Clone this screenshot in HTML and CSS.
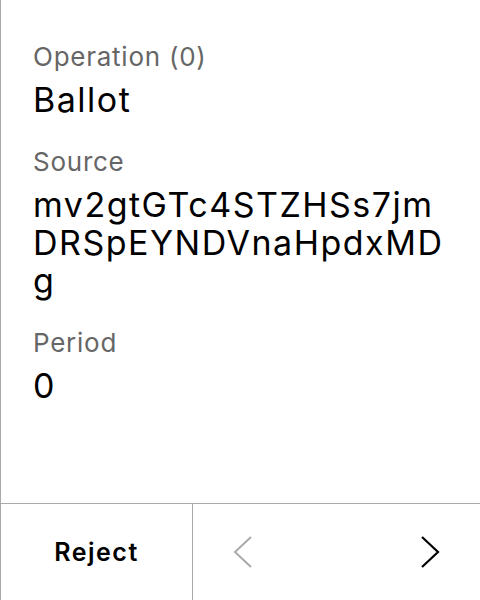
FILE: index.html
```html
<!DOCTYPE html>
<html>
<head>
<meta charset="utf-8">
<link rel="stylesheet" href="styles.css">
</head>
<body>
<div class="panel">
  <div class="content">
    <div class="field">
      <div class="label">Operation (0)</div>
      <div class="value">Ballot</div>
    </div>
    <div class="field">
      <div class="label">Source</div>
      <div class="value">mv2gtGTc4STZHSs7jmDRSpEYNDVnaHpdxMDg</div>
    </div>
    <div class="field">
      <div class="label">Period</div>
      <div class="value">0</div>
    </div>
  </div>
  <div class="footer">
    <div class="reject">Reject</div>
    <div class="nav">
      <svg class="chev chev-prev" width="20" height="32" viewBox="0 0 20 32"><polyline points="18,1 2,16 18,31" fill="none" stroke="currentColor" stroke-width="2"/></svg>
      <svg class="chev chev-next" width="20" height="32" viewBox="0 0 20 32"><polyline points="2,1 18,16 2,31" fill="none" stroke="currentColor" stroke-width="2.2"/></svg>
    </div>
  </div>
</div>
</body>
</html>
```
FILE: styles.css
```css
html, body {
  margin: 0;
  padding: 0;
  background: #fff;
}
body {
  font-family: Inter, "Noto Sans", sans-serif;
  color: #000;
}
.panel {
  width: 480px;
  height: 600px;
  box-sizing: border-box;
  border-left: 1px solid #aaaaaa;
  display: flex;
  flex-direction: column;
}
.content {
  flex: 1;
  padding: 41px 32px 0 32px;
  display: flex;
  flex-direction: column;
  gap: 27px;
}
.label {
  font-size: 26px;
  line-height: 32px;
  letter-spacing: 0.75px;
  color: #666666;
}
.value {
  margin-top: 8px;
  font-size: 34px;
  line-height: 38px;
  letter-spacing: 1.5px;
  color: #000;
  word-break: break-all;
}
.footer {
  height: 96px;
  border-top: 1px solid #aaaaaa;
  display: flex;
  flex-shrink: 0;
}
.reject {
  width: 191px;
  border-right: 1px solid #aaaaaa;
  display: flex;
  align-items: center;
  justify-content: center;
  font-size: 25px;
  font-weight: 600;
  letter-spacing: 1.5px;
}
.nav {
  flex: 1;
  display: flex;
  align-items: center;
  justify-content: space-between;
  padding: 0 40px 0 40px;
}
.chev-prev { color: #aaaaaa; }
.chev-next { color: #000; }
```
